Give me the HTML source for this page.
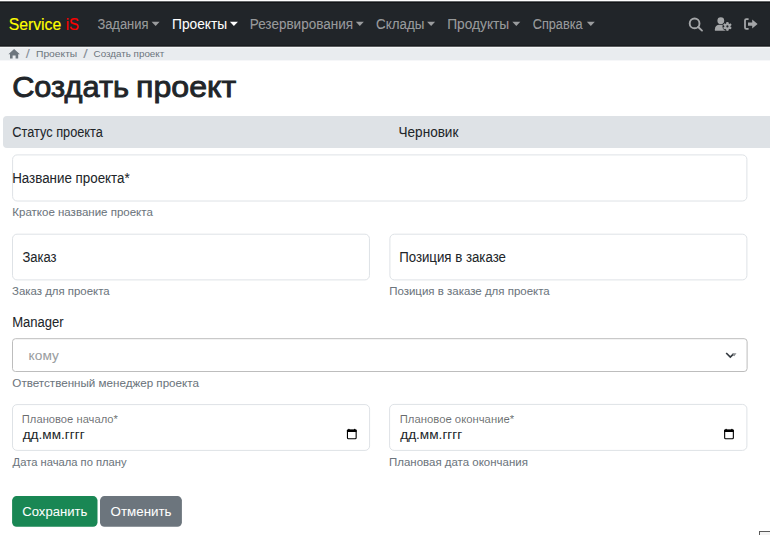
<!DOCTYPE html>
<html><head><meta charset="utf-8">
<style>
*{margin:0;padding:0}
html,body{width:770px;height:535px;overflow:hidden;background:#fff}
svg{position:absolute;left:0;top:0;display:block}
text{font-family:"Liberation Sans",sans-serif;white-space:pre}
</style></head><body>
<svg width="770" height="535" viewBox="0 0 770 535">
<rect x="0" y="0" width="770" height="535" fill="#ffffff"/>
<rect x="0" y="1.3" width="770" height="45.2" fill="#212529"/>
<rect x="0" y="2" width="770" height="1" fill="#131518"/>
<rect x="0" y="46.5" width="770" height="13.9" fill="#e9ecef"/>
<rect x="0" y="45.5" width="770" height="1.3" fill="#121417"/>
<rect x="0" y="46.8" width="770" height="1.3" fill="#f6f7f8"/>
<rect x="3" y="116" width="780" height="32" rx="4" fill="#dee2e6"/>
<g fill="none" stroke="#dee2e6" stroke-width="1">
  <rect x="12.6" y="154.9" width="734.3" height="46.1" rx="4.5"/>
  <rect x="12.5" y="234.2" width="356.95" height="45.7" rx="4.5"/>
  <rect x="389.9" y="234.2" width="357.0" height="45.7" rx="4.5"/>
  <rect x="12.5" y="404.6" width="357.1" height="45.8" rx="4.5"/>
  <rect x="389.6" y="404.4" width="357.3" height="46.0" rx="4.5"/>
</g>
<rect x="12.5" y="338.7" width="734.6" height="32.8" rx="3" fill="none" stroke="#bdbdbd" stroke-width="1"/>
<rect x="12.1" y="496.1" width="85.4" height="30.6" rx="4.5" fill="#198754"/>
<rect x="100" y="496.1" width="81.9" height="30.6" rx="4.5" fill="#6c757d"/>
<rect x="759.5" y="531.5" width="20" height="10" fill="#f4f4f4" stroke="#5a5a5a" stroke-width="1"/>
<!-- carets -->
<g fill="rgba(255,255,255,.55)">
<path d="M151.60 21.8 L159.60 21.8 L155.60 25.9 Z"/>
<path d="M355.80 21.8 L363.80 21.8 L359.80 25.9 Z"/>
<path d="M427.10 21.8 L435.10 21.8 L431.10 25.9 Z"/>
<path d="M512.30 21.8 L520.30 21.8 L516.30 25.9 Z"/>
<path d="M586.80 21.8 L594.80 21.8 L590.80 25.9 Z"/>
</g>
<g fill="#ffffff"><path d="M229.90 21.8 L237.90 21.8 L233.90 25.9 Z"/></g>
<!-- home icon -->
<path d="M14.1 49.0 L19.9 54.2 L18.2 54.2 L18.2 58.4 L15.6 58.4 L15.6 55.6 L12.6 55.6 L12.6 58.4 L10.0 58.4 L10.0 54.2 L8.4 54.2 Z" fill="#6c757d"/>
<!-- search icon -->
<g stroke="#a4a6a8" fill="none" stroke-width="1.9">
  <circle cx="694.6" cy="23.4" r="4.9"/>
  <path d="M698.2 27.0 L702.0 30.6" stroke-linecap="round"/>
</g>
<!-- user gear -->
<g fill="#a4a6a8">
  <circle cx="720.8" cy="20.7" r="3.4"/>
  <path d="M714.9 30.7 L714.9 29.2 C714.9 26.6 716.9 24.8 719.3 24.8 L722.3 24.8 C724.7 24.8 726 26 726 28 L726 30.7 Z"/>
</g>
<circle cx="727.4" cy="26.4" r="4.9" fill="#212529"/>
<g fill="#a4a6a8"><circle cx="727.4" cy="26.4" r="3.1"/><rect x="726.45" y="22.20" width="1.9" height="8.4" transform="rotate(0 727.4 26.4)"/><rect x="726.45" y="22.20" width="1.9" height="8.4" transform="rotate(60 727.4 26.4)"/><rect x="726.45" y="22.20" width="1.9" height="8.4" transform="rotate(120 727.4 26.4)"/><rect x="726.45" y="22.20" width="1.9" height="8.4" transform="rotate(180 727.4 26.4)"/><rect x="726.45" y="22.20" width="1.9" height="8.4" transform="rotate(240 727.4 26.4)"/><rect x="726.45" y="22.20" width="1.9" height="8.4" transform="rotate(300 727.4 26.4)"/></g>
<circle cx="727.4" cy="26.4" r="1.1" fill="#212529"/>
<!-- sign out -->
<g fill="none" stroke="#a4a6a8" stroke-width="1.8">
  <path d="M748.6 19.1 L746.3 19.1 Q745 19.1 745 20.4 L745 27.6 Q745 28.9 746.3 28.9 L748.6 28.9"/>
</g>
<path d="M748 22.4 L752.2 22.4 L752.2 19.6 L757.6 24.1 L752.2 28.6 L752.2 25.8 L748 25.8 Z" fill="#a4a6a8"/>
<!-- select chevron -->
<path d="M726.2 353.0 L730.3 357.0 L733.6 353.9" fill="none" stroke="#343a40" stroke-width="1.7"/>
<path d="M732.6 353.2 L736.5 353.2 L734.3 356.2 L733 355.4 Z" fill="#8a8d90"/>
<!-- calendars -->
<rect x="347.45" y="430.2" width="8.7" height="8.6" rx="1" fill="none" stroke="#000" stroke-width="1.1"/>
<rect x="346.90" y="429.6" width="9.8" height="2.3" rx="0.6" fill="#000"/>
<circle cx="348.90" cy="429.5" r="0.8" fill="#000"/><circle cx="354.70" cy="429.5" r="0.8" fill="#000"/>
<rect x="724.65" y="430.2" width="8.7" height="8.6" rx="1" fill="none" stroke="#000" stroke-width="1.1"/>
<rect x="724.10" y="429.6" width="9.8" height="2.3" rx="0.6" fill="#000"/>
<circle cx="726.10" cy="429.5" r="0.8" fill="#000"/><circle cx="731.90" cy="429.5" r="0.8" fill="#000"/>

<text x="8.71" y="29.70" font-size="16.42" textLength="52.53" lengthAdjust="spacingAndGlyphs" fill="#ffff00" stroke="#ffff00" stroke-width="0.15">Service</text>
<text x="65.67" y="29.70" font-size="16.42" textLength="13.26" lengthAdjust="spacingAndGlyphs" fill="#ff0000" stroke="#ff0000" stroke-width="0.15">iS</text>
<text x="97.40" y="28.80" font-size="14.24" textLength="51.04" lengthAdjust="spacingAndGlyphs" fill="rgba(255,255,255,.55)" stroke="rgba(255,255,255,.55)" stroke-width="0.05">Задания</text>
<text x="172.03" y="28.80" font-size="14.24" textLength="55.13" lengthAdjust="spacingAndGlyphs" fill="#ffffff" stroke="#ffffff" stroke-width="0.05">Проекты</text>
<text x="249.74" y="28.80" font-size="14.24" textLength="103.33" lengthAdjust="spacingAndGlyphs" fill="rgba(255,255,255,.55)" stroke="rgba(255,255,255,.55)" stroke-width="0.05">Резервирования</text>
<text x="376.12" y="28.80" font-size="14.24" textLength="48.21" lengthAdjust="spacingAndGlyphs" fill="rgba(255,255,255,.55)" stroke="rgba(255,255,255,.55)" stroke-width="0.05">Склады</text>
<text x="447.13" y="28.80" font-size="14.24" textLength="62.13" lengthAdjust="spacingAndGlyphs" fill="rgba(255,255,255,.55)" stroke="rgba(255,255,255,.55)" stroke-width="0.05">Продукты</text>
<text x="532.70" y="28.80" font-size="14.24" textLength="49.92" lengthAdjust="spacingAndGlyphs" fill="rgba(255,255,255,.55)" stroke="rgba(255,255,255,.55)" stroke-width="0.05">Справка</text>
<text x="25.70" y="57.80" font-size="11.92" textLength="4.05" lengthAdjust="spacingAndGlyphs" fill="#868e96">/</text>
<text x="36.00" y="57.30" font-size="9.30" textLength="41.25" lengthAdjust="spacingAndGlyphs" fill="#6c757d">Проекты</text>
<text x="83.20" y="57.80" font-size="11.92" textLength="4.45" lengthAdjust="spacingAndGlyphs" fill="#868e96">/</text>
<text x="93.54" y="57.30" font-size="9.30" textLength="70.71" lengthAdjust="spacingAndGlyphs" fill="#6c757d">Создать проект</text>
<text x="12.16" y="96.60" font-size="30.38" textLength="116.87" lengthAdjust="spacingAndGlyphs" fill="#212529" stroke="#212529" stroke-width="0.9">Создать</text>
<text x="136.09" y="96.60" font-size="30.38" textLength="100.06" lengthAdjust="spacingAndGlyphs" fill="#212529" stroke="#212529" stroke-width="0.9">проект</text>
<text x="12.30" y="136.70" font-size="13.95" textLength="90.52" lengthAdjust="spacingAndGlyphs" fill="#212529" stroke="#212529" stroke-width="0.05">Статус проекта</text>
<text x="398.54" y="136.80" font-size="13.95" textLength="59.85" lengthAdjust="spacingAndGlyphs" fill="#212529" stroke="#212529" stroke-width="0.05">Черновик</text>
<text x="12.16" y="183.20" font-size="13.95" textLength="117.53" lengthAdjust="spacingAndGlyphs" fill="#212529" stroke="#212529" stroke-width="0.05">Название проекта*</text>
<text x="12.30" y="215.80" font-size="10.90" textLength="140.53" lengthAdjust="spacingAndGlyphs" fill="#6c757d" stroke="#6c757d" stroke-width="0.05">Краткое название проекта</text>
<text x="22.49" y="261.70" font-size="13.81" textLength="34.08" lengthAdjust="spacingAndGlyphs" fill="#212529" stroke="#212529" stroke-width="0.05">Заказ</text>
<text x="12.14" y="294.90" font-size="11.34" textLength="97.48" lengthAdjust="spacingAndGlyphs" fill="#6c757d" stroke="#6c757d" stroke-width="0.05">Заказ для проекта</text>
<text x="399.17" y="261.70" font-size="13.81" textLength="106.77" lengthAdjust="spacingAndGlyphs" fill="#212529" stroke="#212529" stroke-width="0.05">Позиция в заказе</text>
<text x="389.20" y="295.00" font-size="11.34" textLength="160.52" lengthAdjust="spacingAndGlyphs" fill="#6c757d" stroke="#6c757d" stroke-width="0.05">Позиция в заказе для проекта</text>
<text x="12.18" y="326.80" font-size="13.81" textLength="51.48" lengthAdjust="spacingAndGlyphs" fill="#212529" stroke="#212529" stroke-width="0.05">Manager</text>
<text x="28.64" y="359.90" font-size="13.26" textLength="30.16" lengthAdjust="spacingAndGlyphs" fill="#9a9da0" stroke="#9a9da0" stroke-width="0.05">кому</text>
<text x="12.36" y="387.10" font-size="11.48" textLength="186.57" lengthAdjust="spacingAndGlyphs" fill="#6c757d" stroke="#6c757d" stroke-width="0.05">Ответственный менеджер проекта</text>
<text x="21.82" y="422.80" font-size="10.03" textLength="96.13" lengthAdjust="spacingAndGlyphs" fill="rgba(33,37,41,.65)" stroke="rgba(33,37,41,.65)" stroke-width="0.05">Плановое начало*</text>
<text x="22.70" y="438.50" font-size="11.93" textLength="61.99" lengthAdjust="spacingAndGlyphs" fill="#212529">дд.мм.гггг</text>
<text x="12.60" y="465.80" font-size="11.05" textLength="114.00" lengthAdjust="spacingAndGlyphs" fill="#6c757d" stroke="#6c757d" stroke-width="0.05">Дата начала по плану</text>
<text x="399.72" y="422.80" font-size="10.03" textLength="114.44" lengthAdjust="spacingAndGlyphs" fill="rgba(33,37,41,.65)" stroke="rgba(33,37,41,.65)" stroke-width="0.05">Плановое окончание*</text>
<text x="400.20" y="438.50" font-size="11.93" textLength="62.09" lengthAdjust="spacingAndGlyphs" fill="#212529">дд.мм.гггг</text>
<text x="389.00" y="465.80" font-size="11.05" textLength="138.85" lengthAdjust="spacingAndGlyphs" fill="#6c757d" stroke="#6c757d" stroke-width="0.05">Плановая дата окончания</text>
<text x="22.29" y="516.30" font-size="13.23" textLength="64.99" lengthAdjust="spacingAndGlyphs" fill="#ffffff" stroke="#ffffff" stroke-width="0.05">Сохранить</text>
<text x="110.58" y="516.30" font-size="13.23" textLength="60.91" lengthAdjust="spacingAndGlyphs" fill="#ffffff" stroke="#ffffff" stroke-width="0.05">Отменить</text>
</svg>
</body></html>
